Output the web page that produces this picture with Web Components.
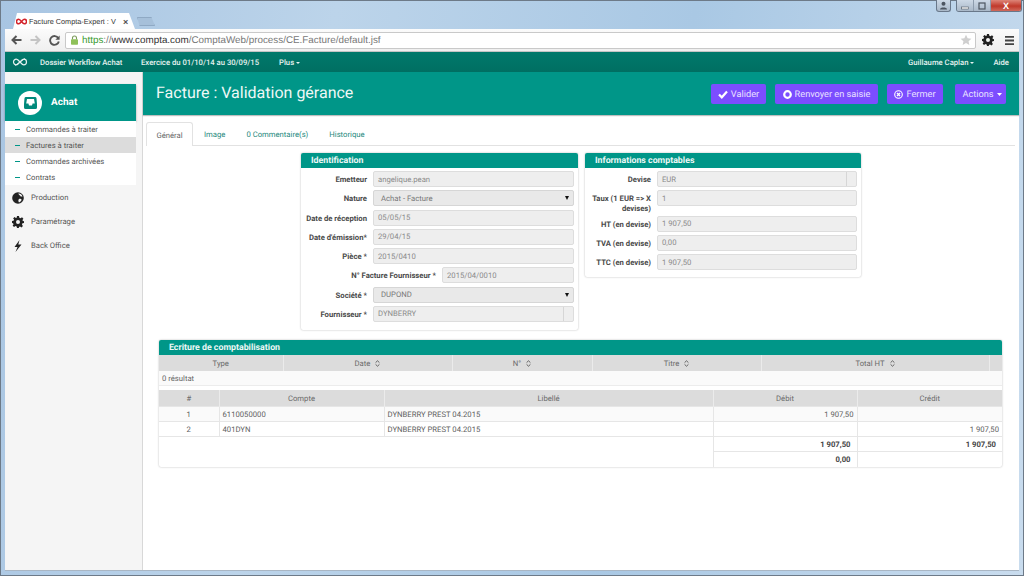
<!DOCTYPE html>
<html lang="fr">
<head>
<meta charset="utf-8">
<title>Facture Compta-Expert</title>
<style>
  html, body { margin: 0; padding: 0; width: 1024px; height: 576px; overflow: hidden; background: #b9d1e8; }
  body { font-family: Roboto, "Liberation Sans", sans-serif; text-rendering: geometricPrecision; }
</style>
</head>
<body>

<template id="tmpl-window">
  <style>
    :host { display: flex; flex-direction: column; box-sizing: border-box; width: 1024px; height: 576px; padding: 0 4px 4px; border: 1px solid #6d7a88; margin: 0;
      background: linear-gradient(100deg, #a8c5e2 0%, #bcd4ea 30%, #a9c8e4 62%, #c9dcee 100%); }
    .caption { height: 11px; display: flex; justify-content: flex-end; align-items: flex-start; gap: 5px; margin-right: -3px; }
    .btn { height: 12px; margin-top: -1px; box-sizing: border-box; border: 1px solid #69788a; border-top: 0; border-radius: 0 0 3px 3px; background: linear-gradient(#cdd9e6, #a9b8c8); display: flex; align-items: center; justify-content: center; }
    .user { width: 15px; }
    .group { display: flex; margin-top: -1px; border: 1px solid #69788a; border-top: 0; border-radius: 0 0 3px 3px; overflow: hidden; height: 12px; box-sizing: border-box; }
    .group div { display: flex; align-items: center; justify-content: center; height: 100%; }
    .min, .max { width: 17px; background: linear-gradient(#cdd9e6, #a9b8c8); border-right: 1px solid #8d9cad; box-sizing: border-box; }
    .close { width: 30px; background: linear-gradient(#dd8578, #c0392b 55%, #cf6a5c); color: #fff; font: bold 9px "Liberation Sans", sans-serif; }
  </style>
  <div class="caption">
    <div class="btn user"><svg width="9" height="9" viewBox="0 0 9 9"><circle cx="4.500" cy="2.800" r="2" fill="#4c5560"/><path d="M1 8.500c0-2.600 7-2.600 7 0z" fill="#4c5560"/></svg></div>
    <div class="group">
      <div class="min"><svg width="8" height="8" viewBox="0 0 8 8"><rect x="0.500" y="5" width="7" height="2" fill="#fff" stroke="#4c5560" stroke-width=".6"/></svg></div>
      <div class="max"><svg width="8" height="8" viewBox="0 0 8 8"><rect x="1" y="1" width="6" height="6" fill="none" stroke="#4c5560" stroke-width="1.200"/></svg></div>
      <div class="close">X</div>
    </div>
  </div>
  <slot></slot>
</template>

<template id="tmpl-chrome">
  <style>
    :host { display: block; flex: none; }
    .strip { height: 17px; display: flex; align-items: flex-end; padding-left: 8px; }
    .tab { width: 122px; height: 16px; box-sizing: border-box; background: #fff; clip-path: polygon(0 100%, 4px 0, 116px 0, 100% 100%); display: flex; align-items: center; padding: 1px 0 0 3px; font: 7.300px "Liberation Sans", sans-serif; color: #333; white-space: nowrap; }
    .tab span { width: 84px; margin-left: 2px; }
    .tab b { margin-left: 10px; font-size: 9px; color: #555; }
    .newtab { width: 18px; height: 9px; margin-left: 2px; margin-bottom: 3px; background: #a6c0da; border: 1px solid #8fa9c4; box-sizing: border-box; clip-path: polygon(0 0, 80% 0, 100% 100%, 15% 100%); }
    .bar { height: 23px; box-sizing: border-box; background: linear-gradient(#fbfbfb, #efefef); display: flex; align-items: center; border-bottom: 1px solid #c4c4c4; }
    .nav { width: 60px; flex: none; display: flex; align-items: center; gap: 8px; padding-left: 6px; box-sizing: border-box; }
    .addr { width: 911px; flex: none; height: 17px; box-sizing: border-box; background: #fff; border: 1px solid #c9c9c9; border-radius: 2px; display: flex; align-items: center; padding: 0 3px 0 5px; font: 9.850px "Liberation Sans", sans-serif; color: #777; white-space: nowrap; }
    .addr svg.lock { margin-right: 4px; flex: none; }
    .addr i { font-style: normal; color: #3a9a2f; }
    .addr em { font-style: normal; color: #333; }
    .addr .u { flex: 1; }
    .tools { display: flex; align-items: center; gap: 9px; padding-left: 6px; }
  </style>
  <div class="strip">
    <div class="tab">
      <svg width="11" height="7" viewBox="0 0 12 7"><path d="M3 1a2.500 2.500 0 1 0 0 5c2 0 4-5 6-5a2.500 2.500 0 1 1 0 5C7 6 5 1 3 1z" fill="none" stroke="#d3232b" stroke-width="1.700"/></svg>
      <span>Facture Compta-Expert : V</span><b>×</b>
    </div>
    <div class="newtab"></div>
  </div>
  <div class="bar">
    <div class="nav">
      <svg width="11" height="10" viewBox="0 0 11 10"><path d="M10.500 5H2M5.500 1 1.500 5l4 4" fill="none" stroke="#555" stroke-width="2"/></svg>
      <svg width="11" height="10" viewBox="0 0 11 10"><path d="M.5 5H9M5.500 1l4 4-4 4" fill="none" stroke="#c4c4c4" stroke-width="2"/></svg>
      <svg width="11" height="11" viewBox="0 0 11 11"><path d="M9.300 3.200A4.400 4.400 0 1 0 9.800 6.500" fill="none" stroke="#555" stroke-width="1.900"/><path d="M10.600.6v4.200H6.400z" fill="#555"/></svg>
    </div>
    <div class="addr">
      <svg class="lock" width="7" height="10" viewBox="0 0 7 10"><path d="M1.500 4.500V3a2 2 0 0 1 4 0v1.500" fill="none" stroke="#7a9a5a" stroke-width="1.100"/><rect y="4.200" width="7" height="5.600" rx=".8" fill="#8fc15a"/></svg>
      <span class="u"><i>https</i>://<em>www.compta.com</em>/ComptaWeb/process/CE.Facture/default.jsf</span>
      <svg width="12" height="12" viewBox="0 0 24 24"><path d="M12 1.500l3.200 7 7.600.8-5.700 5.100 1.600 7.500-6.700-3.800-6.700 3.800 1.600-7.500L1.200 9.300l7.600-.8z" fill="#cfcfcf"/></svg>
    </div>
    <div class="tools">
      <svg width="12" height="12" viewBox="0 0 24 24"><path d="M10 0h4l.7 3.400 2.400 1 2.900-1.900 2.800 2.800-1.900 2.900 1 2.400L24 10v4l-3.100.7-1 2.400 1.900 2.900-2.800 2.800-2.900-1.900-2.400 1L14 24h-4l-.7-3.100-2.400-1-2.900 1.900-2.800-2.800L3.100 17l-1-2.400L0 14v-4l3.100-.7 1-2.400L2.200 5 5 2.200l2.900 1.900 1.400-.7zM12 8a4 4 0 1 0 0 8 4 4 0 0 0 0-8z" fill="#222" fill-rule="evenodd"/></svg>
      <svg width="9" height="9" viewBox="0 0 9 9" style="margin-left:2px"><path d="M0 0h9v1.800H0zM0 3.600h9v1.800H0zM0 7.200h9V9H0z" fill="#444"/></svg>
    </div>
  </div>
</template>

<template id="tmpl-topbar">
  <style>
    :host { display: flex; flex: none; height: 20px; background: linear-gradient(#00796b, #006f62); color: #e6f2f0; font: 500 7.700px Roboto, sans-serif; align-items: center; white-space: nowrap; }
    .logo { margin-left: 7px; width: 16px; flex: none; display: flex; }
    .a { margin-left: 12px; width: 101px; flex: none; }
    .b { width: 138px; flex: none; }
    .c { flex: 1; }
    .u { margin-right: 19px; }
    .h { margin-right: 10px; }
    .caret { display: inline-block; border: 2.500px solid transparent; border-top-color: currentColor; border-bottom: 0; vertical-align: 1px; margin-left: 2px; }
  </style>
  <span class="logo"><svg width="16" height="10" viewBox="0 0 16 10"><path d="M4.300 2.200a2.800 2.800 0 1 0 0 5.600c2.600 0 4.800-5.600 7.400-5.600a2.800 2.800 0 1 1 0 5.600C9.100 7.800 6.900 2.200 4.300 2.200z" fill="none" stroke="#e4f1ef" stroke-width="1.200"/><path d="M3 8.500 13 1.500" stroke="#e4f1ef" stroke-width=".9"/></svg></span>
  <span class="a">Dossier Workflow Achat</span>
  <span class="b">Exercice du 01/10/14 au 30/09/15</span>
  <span class="c">Plus<i class="caret"></i></span>
  <span class="u">Guillaume Caplan<i class="caret"></i></span>
  <span class="h">Aide</span>
</template>

<template id="tmpl-sidebar">
  <style>
    :host { display: block; flex: none; width: 138px; box-sizing: border-box; background: #f5f5f5; border-right: 1px solid #d8d8d8; padding-top: 12px; }
    .head { width: 131px; height: 37px; background: #009688; box-shadow: 0 1px 2px rgba(0,0,0,.35); display: flex; align-items: center; color: #fff; font: bold 10px Roboto, sans-serif; }
    .disc { width: 24px; height: 24px; border-radius: 50%; background: #fff; margin: 0 9px 0 13px; display: flex; align-items: center; justify-content: center; }
    .list { width: 131px; background: #fff; }
  </style>
  <div class="head">
    <span class="disc"><svg width="13" height="12" viewBox="0 0 13 12"><path d="M2 0h9a1.500 1.500 0 0 1 1.500 1.300L13 7v3.500A1.500 1.500 0 0 1 11.500 12h-10A1.500 1.500 0 0 1 0 10.500V7l.5-5.700A1.500 1.500 0 0 1 2 0z" fill="#00897b"/><path d="M3 2h7l.8 4.500H8.600L8 8.500H5l-.6-2H2.200z" fill="#fff"/></svg></span>
    <span>Achat</span>
  </div>
  <div class="list"><slot name="sub"></slot></div>
  <div class="more"><slot></slot></div>
</template>

<template id="tmpl-subitem">
  <style>
    :host { display: flex; align-items: center; height: 16px; color: #555; font: 7.700px Roboto, sans-serif; white-space: nowrap; }
    :host([active]) { background: #dcdcdc; }
    i { width: 5px; height: 1px; background: #009688; margin: 0 6px 0 10px; flex: none; }
  </style>
  <i></i><slot></slot>
</template>

<template id="tmpl-mainitem">
  <style>
    :host { display: flex; height: 24px; color: #555; font: 7.700px Roboto, sans-serif; white-space: nowrap; align-items: center; }
    .ic { width: 12px; height: 12px; margin: 2px 7px 0 7px; display: flex; }
  </style>
  <span class="ic"><slot name="icon"></slot></span><span class="t"><slot></slot></span>
</template>

<template id="tmpl-header">
  <style>
    :host { display: flex; flex: none; height: 43px; background: #009688; box-shadow: 0 1px 1px rgba(0,0,0,.25); align-items: center; padding: 0 13px 2px 13px; box-sizing: border-box; position: relative; }
    h1 { margin: 0; flex: 1; color: #eef8f6; font: 400 16px Roboto, sans-serif; white-space: nowrap; }
    .btns { display: flex; align-items: center; padding-top: 3px; }
  </style>
  <h1><slot name="title"></slot></h1>
  <div class="btns"><slot></slot></div>
</template>

<template id="tmpl-button">
  <style>
    :host { display: flex; align-items: center; justify-content: center; height: 20px; box-sizing: border-box; background: #7c4dff; color: #e9e2ff; font: 400 9.200px Roboto, sans-serif; border-radius: 2px; white-space: nowrap; gap: 3px; }
    .i { display: flex; }
  </style>
  <span class="i"><slot name="icon"></slot></span><slot></slot>
</template>

<template id="tmpl-tabs">
  <style>
    :host { display: flex; flex: none; height: 23px; margin: 7px 4px 0 3px; border-bottom: 1px solid #e2e2e2; box-sizing: content-box; font: 7.700px Roboto, sans-serif; color: #26897d; white-space: nowrap; }
  </style>
  <slot></slot>
</template>

<template id="tmpl-tab">
  <style>
    :host { display: flex; align-items: center; justify-content: center; box-sizing: border-box; height: 23px; padding: 2px 10.500px 0; }
    :host([active]) { background: #fff; border: 1px solid #e2e2e2; border-bottom: 0; border-radius: 3px 3px 0 0; color: #666; height: 24px; width: 47px; padding: 1px 0 0; }
  </style>
  <slot></slot>
</template>

<template id="tmpl-panel">
  <style>
    :host { display: block; box-sizing: border-box; background: #fff; border-radius: 2px; box-shadow: 0 0 2px rgba(0,0,0,.3); }
    h2 { margin: 0; height: 15px; background: #009688; color: #eef8f6; font: bold 8.800px/16px Roboto, sans-serif; padding-left: 10px; border-radius: 2px 2px 0 0; white-space: nowrap; }
    .body { padding: 3px 4px 0 0; }
    :host([flush]) .body { padding: 0; }
  </style>
  <h2></h2>
  <div class="body"><slot></slot></div>
</template>

<template id="tmpl-field">
  <style>
    :host { display: flex; margin-bottom: 3.250px; min-height: 16px; font: 7.700px Roboto, sans-serif; }
    label { width: var(--label-w, 66px); flex: none; box-sizing: border-box; text-align: right; font-weight: bold; color: #4a4a4a; line-height: 10px; padding-top: 4px; margin-bottom: -2px; }
    :host([wide]) label { width: 135px; }
    .in { flex: 1; margin-left: 6px; height: 16px; box-sizing: border-box; background: #eee; border: 1px solid #ddd; border-radius: 2px; color: #8a8a8a; display: flex; align-items: center; padding-left: 4px; white-space: nowrap; }
    :host([kind=select]) .in { padding-left: 7px; background: #e9e9e9; border-color: #d6d6d6; color: #777; }
    .arrow { display: none; margin-left: auto; margin-right: 4px; border: 2.500px solid transparent; border-width: 4px 2.500px 0; border-top-color: #111; }
    :host([kind=select]) .arrow { display: block; }
    .side { display: none; margin-left: auto; width: 9px; height: 100%; border-left: 1px solid #d6d6d6; }
    :host([kind=lookup]) .side { display: block; }
  </style>
  <label></label>
  <div class="in"><span class="v"></span><i class="arrow"></i><i class="side"></i></div>
</template>

<template id="tmpl-ecriture">
  <style>
    :host { display: block; font: 7.700px Roboto, sans-serif; color: #666; }
    table { border-collapse: collapse; table-layout: fixed; width: 843px; }
    th { background: #dcdcdc; font-weight: 400; color: #6a6a6a; border-left: 1px solid #ebebeb; box-sizing: border-box; height: 16px; line-height: 15px; padding: 1px 0 0; }
    th:first-child { border-left: 0; }
    th span { display: inline-block; margin: 4px 0 0 5px; height: 7px; line-height: 0; vertical-align: top; }
    .res { height: 15px; line-height: 15px; background: #fafafa; padding-left: 3px; border-bottom: 1px solid #ececec; margin-bottom: 4px; box-sizing: border-box; }
    td { height: 15px; padding: 0 3px; box-sizing: border-box; border: 1px solid #e6e6e6; white-space: nowrap; color: #5e5e5e; }
    td:first-child { border-left: 0; }
    td:last-child { border-right: 0; }
    .odd td { background: #fafafa; }
    .c { text-align: center; }
    .r { text-align: right; }
    .tot td.r { font-weight: bold; color: #444; padding-right: 6px; }
    tr:last-child td { border-bottom: 0; }
  </style>
  <table>
    <colgroup><col style="width:124px"><col style="width:169px"><col style="width:140px"><col style="width:169px"><col style="width:228px"><col></colgroup>
    <tr><th>Type</th><th>Date<span><sort-caret></sort-caret></span></th><th>N°<span><sort-caret></sort-caret></span></th><th>Titre<span><sort-caret></sort-caret></span></th><th>Total HT<span><sort-caret></sort-caret></span></th><th></th></tr>
  </table>
  <div class="res">0 résultat</div>
  <table>
    <colgroup><col style="width:60px"><col style="width:165px"><col style="width:329px"><col style="width:144px"><col></colgroup>
    <tr><th>#</th><th>Compte</th><th>Libellé</th><th>Débit</th><th>Crédit</th></tr>
    <tr class="odd"><td class="c">1</td><td>6110050000</td><td>DYNBERRY PREST 04.2015</td><td class="r">1 907,50</td><td></td></tr>
    <tr><td class="c">2</td><td>401DYN</td><td>DYNBERRY PREST 04.2015</td><td></td><td class="r">1 907,50</td></tr>
    <tr class="tot"><td colspan="3" rowspan="2" style="border-bottom:0"></td><td class="r">1 907,50</td><td class="r">1 907,50</td></tr>
    <tr class="tot"><td class="r">0,00</td><td></td></tr>
  </table>
</template>

<template id="tmpl-caret">
  <style>:host { display: inline-block; width: 5px; height: 7px; line-height: 0; }</style>
  <svg width="5" height="7" viewBox="0 0 5 7"><path d="M.6 2.600 2.500.8l1.900 1.800M.6 4.400l1.900 1.800 1.900-1.800" fill="none" stroke="#555" stroke-width=".9"/></svg>
</template>

<template id="tmpl-app">
  <style>
    :host { display: flex; flex: 1; min-height: 0; background: #fff; border-bottom: 1px solid #a9b6c4; }
    main { flex: 1; min-width: 0; display: flex; flex-direction: column; }
    .forms { display: flex; justify-content: center; align-items: flex-start; gap: 7px; margin-top: 7px; }
    .forms ::slotted(*) { flex: none; }
    .wide { margin: 10px 17px 0 16px; }
  </style>
  <slot name="side"></slot>
  <main>
    <slot name="head"></slot>
    <slot name="tabs"></slot>
    <div class="forms"><slot name="forms"></slot></div>
    <div class="wide"><slot name="wide"></slot></div>
  </main>
</template>

<browser-window>
  <browser-chrome></browser-chrome>
  <app-topbar></app-topbar>
  <app-frame>
    <side-bar slot="side">
      <sub-item slot="sub">Commandes à traiter</sub-item>
      <sub-item slot="sub" active>Factures à traiter</sub-item>
      <sub-item slot="sub">Commandes archivées</sub-item>
      <sub-item slot="sub">Contrats</sub-item>
      <main-item>
        <svg slot="icon" width="12" height="12" viewBox="0 0 12 12"><circle cx="6" cy="6" r="5.800" fill="#222"/><path d="M6.500 1.200c2 .3 3.500 1.500 4 3.300-1 .3-2 0-2.400-.8-.6-.9-1.700-1-1.600-2.500zM7 7c1.200-.4 2.300 0 2.600.9-.6 1.200-1.400 2-2.600 2.500-.8-1-.9-2.400 0-3.400z" fill="#f5f5f5"/></svg>
        Production</main-item>
      <main-item>
        <svg slot="icon" width="12" height="12" viewBox="0 0 24 24"><path d="M10 0h4l.7 3.400 2.400 1 2.900-1.900 2.800 2.800-1.900 2.900 1 2.400L24 10v4l-3.100.7-1 2.400 1.900 2.900-2.800 2.800-2.900-1.900-2.400 1L14 24h-4l-.7-3.100-2.400-1-2.900 1.900-2.800-2.800L3.100 17l-1-2.400L0 14v-4l3.100-.7 1-2.400L2.200 5 5 2.200l2.900 1.900 1.400-.7zM12 8a4 4 0 1 0 0 8 4 4 0 0 0 0-8z" fill="#222" fill-rule="evenodd"/></svg>
        Paramétrage</main-item>
      <main-item>
        <svg slot="icon" width="12" height="12" viewBox="0 0 12 12"><path d="M7.500 0 2.500 7h3L3.500 12l6-7.500H6.300z" fill="#222"/></svg>
        Back Office</main-item>
    </side-bar>

    <page-header slot="head">
      <span slot="title">Facture : Validation gérance</span>
      <action-button style="width:55px">
        <svg slot="icon" width="10" height="9" viewBox="0 0 10 9"><path d="M1 4.500 3.800 7.300 9 1.500" fill="none" stroke="#fff" stroke-width="2.200"/></svg>Valider</action-button>
      <action-button style="width:103px;margin-left:9px">
        <svg slot="icon" width="9" height="9" viewBox="0 0 9 9"><circle cx="4.500" cy="4.500" r="3.300" fill="none" stroke="#fff" stroke-width="2.200"/></svg>Renvoyer en saisie</action-button>
      <action-button style="width:56px;margin-left:9px">
        <svg slot="icon" width="9" height="9" viewBox="0 0 9 9"><circle cx="4.500" cy="4.500" r="3.800" fill="none" stroke="#fff" stroke-width="1.100"/><path d="M3 3l3 3M6 3 3 6" stroke="#fff" stroke-width="1.300"/></svg>Fermer</action-button>
      <action-button style="width:51px;margin-left:12px">Actions <svg width="5" height="3" viewBox="0 0 5 3"><path d="M0 0h5L2.500 3z" fill="#fff"/></svg></action-button>
    </page-header>

    <tab-bar slot="tabs">
      <tab-link active>Général</tab-link>
      <tab-link style="padding-left:11px">Image</tab-link>
      <tab-link>0 Commentaire(s)</tab-link>
      <tab-link>Historique</tab-link>
    </tab-bar>

    <form-panel slot="forms" heading="Identification" style="width:277px;height:177px">
      <form-field label="Emetteur" value="angelique.pean"></form-field>
      <form-field label="Nature" value="Achat - Facture" kind="select"></form-field>
      <form-field label="Date de réception" value="05/05/15"></form-field>
      <form-field label="Date d'émission*" value="29/04/15"></form-field>
      <form-field label="Pièce *" value="2015/0410"></form-field>
      <form-field label="N° Facture Fournisseur *" value="2015/04/0010" wide></form-field>
      <form-field label="Société *" value="DUPOND" kind="select"></form-field>
      <form-field label="Fournisseur *" value="DYNBERRY" kind="lookup"></form-field>
    </form-panel>

    <form-panel slot="forms" heading="Informations comptables" style="width:276px;height:124px">
      <form-field label="Devise" value="EUR" kind="lookup"></form-field>
      <form-field label="Taux (1 EUR =&gt; X devises)" value="1"></form-field>
      <form-field label="HT (en devise)" value="1 907,50"></form-field>
      <form-field label="TVA (en devise)" value="0,00"></form-field>
      <form-field label="TTC (en devise)" value="1 907,50"></form-field>
    </form-panel>

    <form-panel slot="wide" heading="Ecriture de comptabilisation" flush>
      <ecriture-table></ecriture-table>
    </form-panel>
  </app-frame>
</browser-window>

<script>
"use strict";

// elements that only clone their template
function define(name, tmplId, extra) {
  customElements.define(name, class extends HTMLElement {
    constructor() {
      super();
      this.attachShadow({ mode: "open" }).append(document.getElementById(tmplId).content.cloneNode(true));
    }
    connectedCallback() {
      if (extra) extra(this);
    }
  });
}

define("browser-window", "tmpl-window");
define("browser-chrome", "tmpl-chrome");
define("app-topbar", "tmpl-topbar");
define("app-frame", "tmpl-app");
define("side-bar", "tmpl-sidebar");
define("sub-item", "tmpl-subitem");
define("main-item", "tmpl-mainitem");
define("page-header", "tmpl-header");
define("action-button", "tmpl-button");
define("tab-bar", "tmpl-tabs");
define("tab-link", "tmpl-tab");
define("sort-caret", "tmpl-caret");
define("ecriture-table", "tmpl-ecriture");

define("form-panel", "tmpl-panel", el => {
  el.shadowRoot.querySelector("h2").textContent = el.getAttribute("heading");
});

define("form-field", "tmpl-field", el => {
  el.shadowRoot.querySelector("label").textContent = el.getAttribute("label");
  el.shadowRoot.querySelector(".v").textContent = el.getAttribute("value");
});
</script>
</body>
</html>
